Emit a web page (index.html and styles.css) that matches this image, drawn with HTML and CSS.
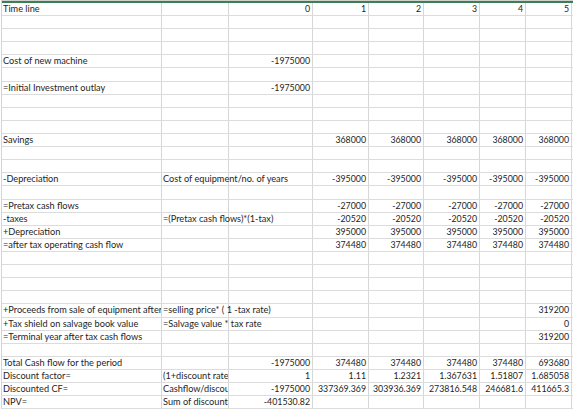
FILE: index.html
```html
<!DOCTYPE html>
<html>
<head>
<meta charset="utf-8">
<link rel="stylesheet" href="styles.css">
</head>
<body>
<div class="sheet">
  <div class="r hdr"><div class="c">Time line</div><div class="c"></div><div class="c n">0</div><div class="c n">1</div><div class="c n">2</div><div class="c n">3</div><div class="c n">4</div><div class="c n">5</div></div>
  <div class="r"><div class="c"></div><div class="c"></div><div class="c"></div><div class="c"></div><div class="c"></div><div class="c"></div><div class="c"></div><div class="c"></div></div>
  <div class="r"><div class="c"></div><div class="c"></div><div class="c"></div><div class="c"></div><div class="c"></div><div class="c"></div><div class="c"></div><div class="c"></div></div>
  <div class="r"><div class="c"></div><div class="c"></div><div class="c"></div><div class="c"></div><div class="c"></div><div class="c"></div><div class="c"></div><div class="c"></div></div>
  <div class="r"><div class="c">Cost of new machine</div><div class="c"></div><div class="c n">-1975000</div><div class="c"></div><div class="c"></div><div class="c"></div><div class="c"></div><div class="c"></div></div>
  <div class="r"><div class="c"></div><div class="c"></div><div class="c"></div><div class="c"></div><div class="c"></div><div class="c"></div><div class="c"></div><div class="c"></div></div>
  <div class="r"><div class="c">=Initial Investment outlay</div><div class="c"></div><div class="c n">-1975000</div><div class="c"></div><div class="c"></div><div class="c"></div><div class="c"></div><div class="c"></div></div>
  <div class="r"><div class="c"></div><div class="c"></div><div class="c"></div><div class="c"></div><div class="c"></div><div class="c"></div><div class="c"></div><div class="c"></div></div>
  <div class="r"><div class="c"></div><div class="c"></div><div class="c"></div><div class="c"></div><div class="c"></div><div class="c"></div><div class="c"></div><div class="c"></div></div>
  <div class="r"><div class="c"></div><div class="c"></div><div class="c"></div><div class="c"></div><div class="c"></div><div class="c"></div><div class="c"></div><div class="c"></div></div>
  <div class="r"><div class="c">Savings</div><div class="c"></div><div class="c"></div><div class="c n">368000</div><div class="c n">368000</div><div class="c n">368000</div><div class="c n">368000</div><div class="c n">368000</div></div>
  <div class="r"><div class="c"></div><div class="c"></div><div class="c"></div><div class="c"></div><div class="c"></div><div class="c"></div><div class="c"></div><div class="c"></div></div>
  <div class="r"><div class="c"></div><div class="c"></div><div class="c"></div><div class="c"></div><div class="c"></div><div class="c"></div><div class="c"></div><div class="c"></div></div>
  <div class="r"><div class="c">-Depreciation</div><div class="c">Cost of equipment/no. of years</div><div class="c"></div><div class="c n">-395000</div><div class="c n">-395000</div><div class="c n">-395000</div><div class="c n">-395000</div><div class="c n">-395000</div></div>
  <div class="r"><div class="c"></div><div class="c"></div><div class="c"></div><div class="c"></div><div class="c"></div><div class="c"></div><div class="c"></div><div class="c"></div></div>
  <div class="r"><div class="c">=Pretax cash flows</div><div class="c"></div><div class="c"></div><div class="c n">-27000</div><div class="c n">-27000</div><div class="c n">-27000</div><div class="c n">-27000</div><div class="c n">-27000</div></div>
  <div class="r"><div class="c">-taxes</div><div class="c">=(Pretax cash flows)*(1-tax)</div><div class="c"></div><div class="c n">-20520</div><div class="c n">-20520</div><div class="c n">-20520</div><div class="c n">-20520</div><div class="c n">-20520</div></div>
  <div class="r"><div class="c">+Depreciation</div><div class="c"></div><div class="c"></div><div class="c n">395000</div><div class="c n">395000</div><div class="c n">395000</div><div class="c n">395000</div><div class="c n">395000</div></div>
  <div class="r"><div class="c">=after tax operating cash flow</div><div class="c"></div><div class="c"></div><div class="c n">374480</div><div class="c n">374480</div><div class="c n">374480</div><div class="c n">374480</div><div class="c n">374480</div></div>
  <div class="r"><div class="c"></div><div class="c"></div><div class="c"></div><div class="c"></div><div class="c"></div><div class="c"></div><div class="c"></div><div class="c"></div></div>
  <div class="r"><div class="c"></div><div class="c"></div><div class="c"></div><div class="c"></div><div class="c"></div><div class="c"></div><div class="c"></div><div class="c"></div></div>
  <div class="r"><div class="c"></div><div class="c"></div><div class="c"></div><div class="c"></div><div class="c"></div><div class="c"></div><div class="c"></div><div class="c"></div></div>
  <div class="r"><div class="c"></div><div class="c"></div><div class="c"></div><div class="c"></div><div class="c"></div><div class="c"></div><div class="c"></div><div class="c"></div></div>
  <div class="r"><div class="c clip">+Proceeds from sale of equipment after tax</div><div class="c">=selling price* ( 1 -tax rate)</div><div class="c"></div><div class="c"></div><div class="c"></div><div class="c"></div><div class="c"></div><div class="c n">319200</div></div>
  <div class="r"><div class="c">+Tax shield on salvage book value</div><div class="c">=Salvage value * tax rate</div><div class="c"></div><div class="c"></div><div class="c"></div><div class="c"></div><div class="c"></div><div class="c n">0</div></div>
  <div class="r"><div class="c">=Terminal year after tax cash flows</div><div class="c"></div><div class="c"></div><div class="c"></div><div class="c"></div><div class="c"></div><div class="c"></div><div class="c n">319200</div></div>
  <div class="r"><div class="c"></div><div class="c"></div><div class="c"></div><div class="c"></div><div class="c"></div><div class="c"></div><div class="c"></div><div class="c"></div></div>
  <div class="r"><div class="c">Total Cash flow for the period</div><div class="c"></div><div class="c n">-1975000</div><div class="c n">374480</div><div class="c n">374480</div><div class="c n">374480</div><div class="c n">374480</div><div class="c n">693680</div></div>
  <div class="r"><div class="c">Discount factor=</div><div class="c clip">(1+discount rate)^n</div><div class="c n">1</div><div class="c n">1.11</div><div class="c n">1.2321</div><div class="c n">1.367631</div><div class="c n">1.51807</div><div class="c n">1.685058</div></div>
  <div class="r"><div class="c">Discounted CF=</div><div class="c clip">Cashflow/discount factor</div><div class="c n">-1975000</div><div class="c n">337369.369</div><div class="c n">303936.369</div><div class="c n">273816.548</div><div class="c n">246681.6</div><div class="c n">411665.3</div></div>
  <div class="r last"><div class="c">NPV=</div><div class="c clip">Sum of discounted CF</div><div class="c n">-401530.82</div><div class="c"></div><div class="c"></div><div class="c"></div><div class="c"></div><div class="c"></div></div>
</div>
</body>
</html>
```

FILE: styles.css
```css
html, body {
  margin: 0;
  padding: 0;
  background: #ffffff;
}

body {
  font-family: Lato, "Liberation Sans", sans-serif;
  font-size: 9.2px;
  color: #1e1e1e;
}

.sheet {
  width: 571px;
  margin-left: 1px;
  border-left: 1px solid #d4d4d4;
  border-top: 1px solid #cfcfcf;
}

.r {
  display: flex;
  height: 13.12px;
  box-sizing: border-box;
  border-bottom: 1px solid #dcdcdc;
}

.r.hdr {
  height: 15px;
  border-top: 2px solid #3b7f52;
}

.c {
  box-sizing: border-box;
  border-right: 1px solid #d6d6d6;
  padding: 0 2px 0 1px;
  white-space: nowrap;
  line-height: 12px;
  flex: none;
}

.c:nth-child(1) { width: 160px; }
.c:nth-child(2) { width: 67px; }
.c:nth-child(3) { width: 84px; }
.c:nth-child(4) { width: 56px; }
.c:nth-child(5) { width: 55px; }
.c:nth-child(6) { width: 56px; }
.c:nth-child(7) { width: 46px; }
.c:nth-child(8) { width: 46px; }

.c.n {
  text-align: right;
  font-size: 8.8px;
}

.c.clip {
  overflow: hidden;
}
```
